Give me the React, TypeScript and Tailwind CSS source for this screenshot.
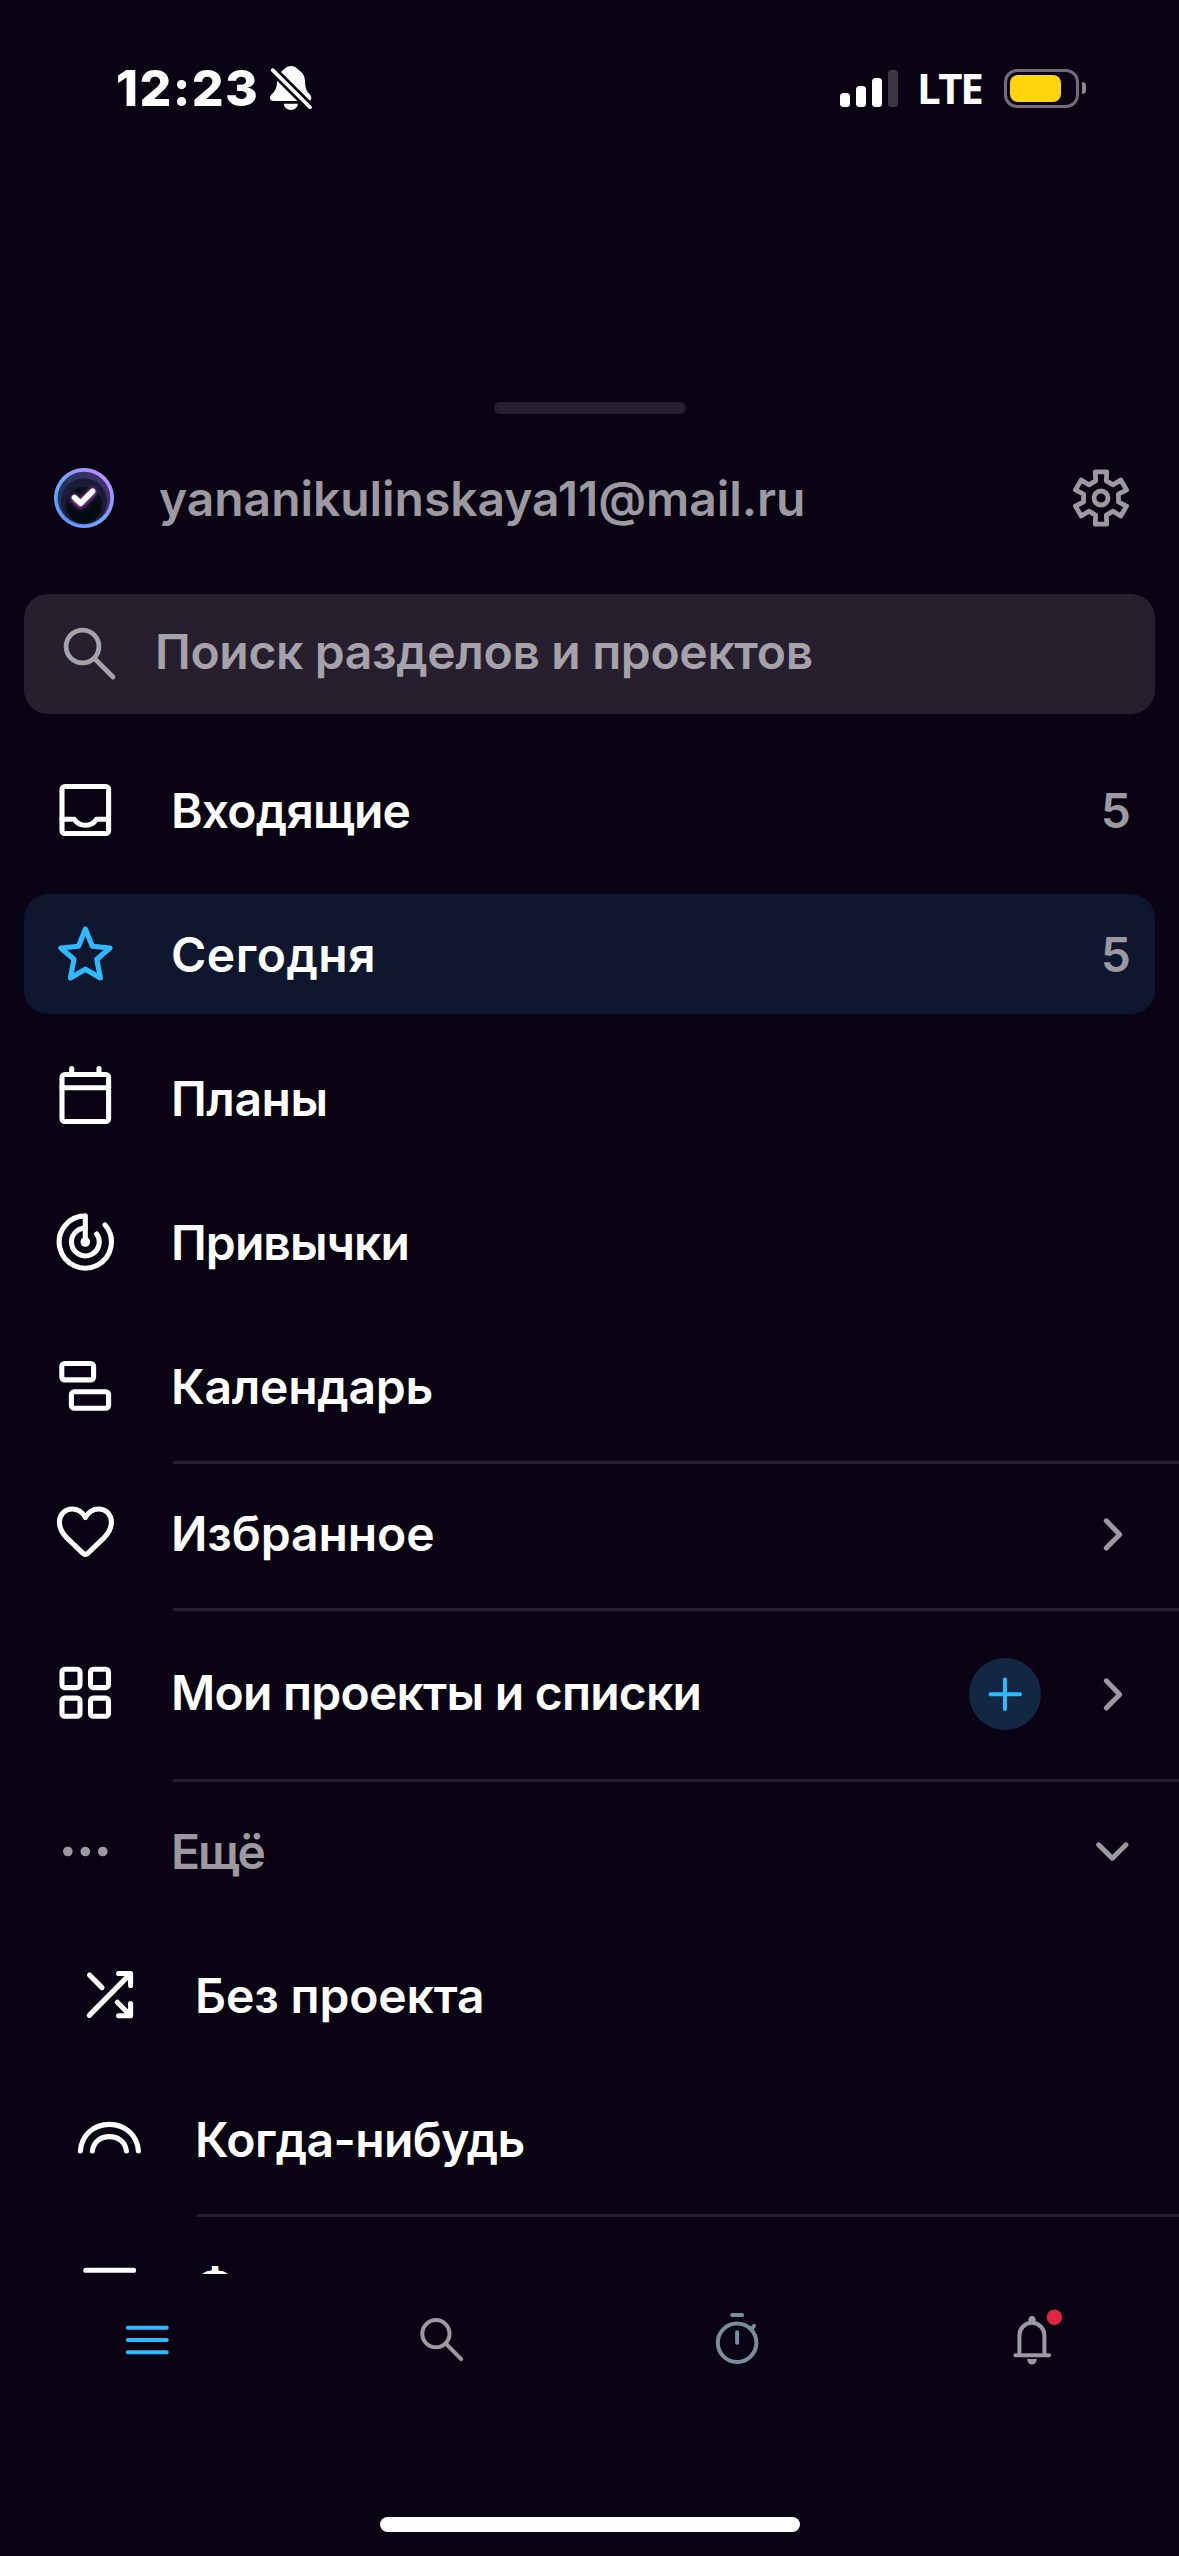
import type { ReactNode } from "react";

type IconProps = { children: ReactNode; className?: string; width?: number };

function Icon({ children, className = "", width = 5.1 }: IconProps) {
  return (
    <svg
      viewBox="0 0 72 72"
      className={`size-[72px] shrink-0 ${className}`}
      fill="none"
      stroke="currentColor"
      strokeWidth={width}
      strokeLinecap="round"
      strokeLinejoin="round"
    >
      {children}
    </svg>
  );
}

const InboxIcon = () => (
  <Icon>
    <rect x="13" y="12.5" width="46.6" height="47" rx="2.8" />
    <path d="M13 45.3H25.3c2.3 3.8 6.3 6 11.1 6s8.8-2.2 11.1-6h12" />
  </Icon>
);

const StarIcon = () => (
  <Icon className="text-[#2fbaff]">
    <path d="M36.4 11 43.3 28.2 61 30 47.8 41.2 51.4 60 36.4 51.2 21.4 60 25 41.2 11.8 30 29.5 28.2Z" />
  </Icon>
);

const PlansIcon = () => (
  <Icon>
    <rect x="13" y="12.5" width="46.6" height="47" rx="2.8" />
    <path d="M13 25.7H59.6M22.7 6.5V12M50 6.5V12" />
  </Icon>
);

const HabitsIcon = () => (
  <Icon>
    <path d="M36.3 36V9.9A26.1 26.1 0 1 0 56 18.9" />
    <path d="M36.3 22.1A13.9 13.9 0 1 0 47.7 28" />
    <circle cx="36.3" cy="36" r="4.8" fill="currentColor" stroke="none" />
  </Icon>
);

const CalendarIcon = () => (
  <Icon>
    <rect x="12.8" y="13.5" width="31.8" height="16.4" rx="2.8" />
    <rect x="22.4" y="41.8" width="37.2" height="16.4" rx="2.8" />
  </Icon>
);

const HeartIcon = () => (
  <Icon>
    <path d="M36.4 19.6C33.5 14.2 28.8 11 23 11 15.8 11 10.4 16.8 10.4 24c0 6.6 2.8 11 7.2 15.6L33.8 55.2q2.6 2.4 5.2 0L55.2 39.6C59.6 35 62.4 30.6 62.4 24 62.4 16.8 57 11 49.8 11 44 11 39.3 14.2 36.4 19.6Z" />
  </Icon>
);

const GridIcon = () => (
  <Icon>
    <rect x="13" y="11.2" width="18" height="18.4" rx="2.8" />
    <rect x="41.5" y="11.2" width="18" height="18.4" rx="2.8" />
    <rect x="13" y="40.1" width="18" height="18.2" rx="2.8" />
    <rect x="41.5" y="40.1" width="18" height="18.2" rx="2.8" />
  </Icon>
);

const DotsIcon = () => (
  <Icon className="text-[#9c99a1]">
    <g fill="currentColor" stroke="none">
      <circle cx="18.8" cy="35.5" r="4.8" />
      <circle cx="36.3" cy="35.5" r="4.8" />
      <circle cx="53.8" cy="35.5" r="4.8" />
    </g>
  </Icon>
);

const ShuffleIcon = () => (
  <Icon>
    <path d="M16.3 56.4 57.6 14.6M45.6 14.5H57.6V26.5M16.5 16 29 28.6M44.3 43.2 57 56M45.6 56.8H57.6V44.6" />
  </Icon>
);

const RainbowIcon = () => (
  <Icon>
    <path d="M7.4 48C8.5 32 21 21.4 36.4 21.4S64.3 32 65.4 48" />
    <path d="M19.4 48C20.5 38.5 28 33.6 36.4 33.6S52.3 38.5 53.4 48" />
  </Icon>
);

const FilterIcon = () => (
  <Icon>
    <path d="M12.8 19.3H60.6M22 36H51M31 52.7H42" />
  </Icon>
);

// Six-tooth cog outline, built tooth by tooth around the centre.
const cogPoints = Array.from({ length: 6 }, (_, i) =>
  [
    [-17.4, 17.9],
    [-12.4, 26.8],
    [12.4, 26.8],
    [17.4, 17.9],
  ].map(([offset, r]) => {
    const a = ((i * 60 + offset) * Math.PI) / 180;
    return `${(36 + r * Math.sin(a)).toFixed(2)},${(36 - r * Math.cos(a)).toFixed(2)}`;
  })
)
  .flat()
  .join(" ");

const GearIcon = () => (
  <Icon className="text-[#9c99a1]" width={4.8}>
    <polygon points={cogPoints} />
    <circle cx="36" cy="36" r="7" />
  </Icon>
);

const Chevron = ({ down = false }: { down?: boolean }) => (
  <svg viewBox="0 0 36 36" className="size-9 shrink-0 text-[#9c99a1]" fill="none" stroke="currentColor" strokeWidth="5" strokeLinecap="round" strokeLinejoin="round">
    <path d={down ? "M3.6 10.8 17.3 24.2 31 10.8" : "M11.3 4.8 24.7 18.4 11.3 32"} />
  </svg>
);

const Avatar = () => (
  <svg viewBox="0 0 60 60" className="size-[60px] shrink-0">
    <defs>
      <linearGradient id="ring" x1="0" y1="0.15" x2="1" y2="0.85">
        <stop offset="0" stopColor="#6fa6ff" />
        <stop offset="0.3" stopColor="#8f9cff" />
        <stop offset="0.5" stopColor="#a98aff" />
        <stop offset="0.75" stopColor="#8fa0ff" />
        <stop offset="1" stopColor="#6cb4ff" />
      </linearGradient>
      <linearGradient id="ringTint" x1="0.1" y1="0.9" x2="0.85" y2="0.1">
        <stop offset="0" stopColor="#4d8df5" />
        <stop offset="0.45" stopColor="#6fa6ff" />
        <stop offset="0.75" stopColor="#a18dff" />
        <stop offset="1" stopColor="#c58cff" />
      </linearGradient>
      <linearGradient id="shell" x1="0" y1="0.5" x2="1" y2="0.2">
        <stop offset="0" stopColor="#1f3557" />
        <stop offset="1" stopColor="#43306f" />
      </linearGradient>
      <filter id="glow" x="-50%" y="-50%" width="200%" height="200%">
        <feGaussianBlur stdDeviation="2" />
      </filter>
    </defs>
    <circle cx="30" cy="30" r="30" fill="url(#ringTint)" />
    <circle cx="30" cy="30" r="29" fill="none" stroke="url(#ring)" strokeWidth="1" />
    <circle cx="30" cy="30" r="26.3" fill="url(#shell)" />
    <circle cx="30" cy="33.2" r="23" fill="#1a1c36" />
    <circle cx="30" cy="37" r="18" fill="#0b0d18" />
    <circle cx="30" cy="41" r="14.5" fill="#050b12" />
    <path d="M20.5 30.5 26.6 36.4 38.6 24" fill="none" stroke="#b04fd0" strokeWidth="7" strokeLinecap="round" strokeLinejoin="round" filter="url(#glow)" />
    <path d="M20.5 29.5 26.6 35.2 38.6 23.2" fill="none" stroke="#fff" strokeWidth="5.6" strokeLinecap="round" strokeLinejoin="round" />
  </svg>
);

const SilentBell = () => (
  <svg viewBox="0 0 42 44" className="h-[44px] w-[42px] shrink-0">
    <path fill="#fff" d="M21 0C25.5 0 27.5 3 29.5 4.5 33.5 7.5 34.8 11 35 15.5 35.2 22 36.5 25 39 27.5 40.5 29 41.3 30.3 41.3 32 41.3 34 40 35 38 35H3.5C1.4 35 0 34 0 32 0 30.3 1 29 2.5 27.5 5.5 24.5 6.8 22 7 15.5 7.2 11 8.5 7.5 12.5 4.5 14.5 3 16.5 0 21 0Z" />
    <path fill="#fff" d="M13.7 37.8H28C27.5 41.5 24.8 44 20.9 44S14.2 41.5 13.7 37.8Z" />
    <path d="M-1 .4 43 44.2" stroke="#0a0314" strokeWidth="9" />
    <path d="M2.7 4.1 40 41.2" stroke="#fff" strokeWidth="3.6" strokeLinecap="round" />
  </svg>
);

function StatusBar() {
  return (
    <header className="flex h-[176px] items-center pr-[93px] pl-[116px]">
      <span className="w-[154px] text-[50px] leading-none font-extrabold tracking-[1.4px]">12:23</span>
      <SilentBell />
      <div className="ml-auto flex items-center">
        <div className="flex h-[37px] items-end gap-1.5">
          <i className="h-[14px] w-2.5 rounded-[3.5px] bg-white" />
          <i className="h-[21px] w-2.5 rounded-[3.5px] bg-white" />
          <i className="h-[29px] w-2.5 rounded-[3.5px] bg-white" />
          <i className="h-[37px] w-2.5 rounded-[3.5px] bg-[#3c3643]" />
        </div>
        <span className="ml-[19px] w-[87px] font-['Open_Sans'] text-[42px] leading-none font-bold tracking-[-2.4px]">LTE</span>
        <div className="flex h-[39px] w-[75px] items-center rounded-[13px] border-3 border-[#706c78] px-[3px]">
          <div className="h-[27px] w-[51px] rounded-[8px] bg-[#ffd60c]" />
        </div>
        <div className="ml-[3px] h-3 w-1 rounded-r-full bg-[#8a8791]" />
      </div>
    </header>
  );
}

type RowProps = {
  icon: ReactNode;
  label: string;
  labelClass?: string;
  className?: string;
  children?: ReactNode;
};

function Row({ icon, label, labelClass = "", className = "h-[120px]", children }: RowProps) {
  return (
    <div className={`mx-6 flex shrink-0 items-center pr-6 pl-[25px] ${className}`}>
      {icon}
      <span className={`ml-[50px] pt-0.5 leading-[60px] whitespace-nowrap ${labelClass}`}>{label}</span>
      <div className="ml-auto flex items-center">{children}</div>
    </div>
  );
}

const Count = ({ value }: { value: number }) => (
  <span className="pt-0.5 leading-[60px] text-[#9c99a1]">{value}</span>
);

const Divider = ({ className = "ml-[173px]" }: { className?: string }) => (
  <hr className={`h-[3px] shrink-0 border-0 bg-[#251f2e] ${className}`} />
);

export default function App() {
  return (
    <div className="flex h-[2556px] w-[1179px] flex-col overflow-hidden bg-[#0a0314] font-[Inter,sans-serif] text-[48px] font-semibold text-white">
      <StatusBar />
      <div className="mt-[226px] h-3 w-48 shrink-0 self-center rounded-[6px] bg-[#251f2e]" />

      <div className="mt-6 flex h-[120px] shrink-0 items-center pr-[42px] pl-[54px]">
        <Avatar />
        <span className="ml-[45px] pt-0.5 leading-[60px] tracking-[-0.05px] text-[#9c99a1]">yananikulinskaya11@mail.ru</span>
        <div className="ml-auto">
          <GearIcon />
        </div>
      </div>

      <div className="mx-6 mt-9 flex h-[120px] shrink-0 items-center rounded-[24px] bg-[#251f2e] pl-[25px] text-[#a5a2aa]">
        <Icon width={4.8}>
          <circle cx="33.5" cy="28.5" r="16.4" />
          <path d="M45.3 40.3 64 59" />
        </Icon>
        <span className="ml-[34px] pb-1 leading-[60px] tracking-[-0.34px]">Поиск разделов и проектов</span>
      </div>

      <nav className="mt-9 flex h-[1524px] shrink-0 flex-col overflow-hidden">
        <div className="flex flex-col gap-6">
          <Row icon={<InboxIcon />} label="Входящие" labelClass="tracking-[-0.8px]">
            <Count value={5} />
          </Row>
          <Row icon={<StarIcon />} label="Сегодня" labelClass="tracking-[0.5px]" className="h-[120px] rounded-[24px] bg-[#0e172d]">
            <Count value={5} />
          </Row>
          <Row icon={<PlansIcon />} label="Планы" labelClass="tracking-[-0.45px]" />
          <Row icon={<HabitsIcon />} label="Привычки" labelClass="tracking-[-0.93px]" />
          <Row icon={<CalendarIcon />} label="Календарь" labelClass="tracking-[-0.26px]" />
        </div>
        <Divider className="mt-[15px] ml-[173px]" />
        <Row icon={<HeartIcon />} label="Избранное" labelClass="pb-0.5 tracking-[-0.1px]" className="h-[144px] pb-1">
          <Chevron />
        </Row>
        <Divider />
        <Row icon={<GridIcon />} label="Мои проекты и списки" labelClass="pb-[3px] tracking-[-0.76px]" className="h-[168px] pb-[3px]">
          <div className="mr-[54px] flex size-[72px] items-center justify-center rounded-full bg-[#122842]">
            <Icon className="text-[#2fbaff]" width={4}>
              <path d="M21.5 36.3H51M36 21.6V51" />
            </Icon>
          </div>
          <Chevron />
        </Row>
        <Divider />
        <Row icon={<DotsIcon />} label="Ещё" labelClass="pb-0.5 tracking-[-2px] text-[#9c99a1]" className="h-[141px] pb-0.5">
          <Chevron down />
        </Row>
        <div className="ml-6 flex flex-col">
          <Row icon={<ShuffleIcon />} label="Без проекта" labelClass="tracking-[-0.13px]" className="h-[144px]" />
          <Row icon={<RainbowIcon />} label="Когда-нибудь" labelClass="tracking-[-0.6px]" className="h-[144px]" />
          <Divider className="mt-[3px] ml-[173px]" />
          <Row icon={<FilterIcon />} label="Фильтры" labelClass="pb-1" className="h-[144px] pb-[5px]" />
        </div>
      </nav>

      <footer className="grid h-[132px] shrink-0 grid-cols-4 place-items-center text-[#9c99a1]">
        <Icon className="text-[#2fbaff]" width={4}>
          <path d="M16.9 23.8H55.7M16.9 36H55.7M16.9 48.2H55.7" />
        </Icon>
        <Icon width={4}>
          <circle cx="29.9" cy="29.7" r="13.6" />
          <path d="M39.6 39.4 55.2 55.2" />
        </Icon>
        <Icon className="text-[#7a8d9b]" width={4}>
          <circle cx="36.1" cy="38.7" r="19.3" />
          <path d="M36.1 28.3V38.7M31.1 11H41.1M50.2 25.2 53 21.9" />
        </Icon>
        <Icon width={4}>
          <path d="M23.4 51.3V31.3a12.5 12.5 0 0 1 25 0V51.3M19.4 51.3H53" />
          <g stroke="none">
            <circle cx="36" cy="15.5" r="3.5" fill="currentColor" />
            <rect x="32.5" y="15.5" width="7" height="4" fill="currentColor" />
            <path d="M31.2 55H40.8A4.8 5.5 0 0 1 31.2 55Z" fill="currentColor" />
            <circle cx="58.4" cy="13.3" r="7.7" fill="#de2843" />
          </g>
        </Icon>
      </footer>
      <div className="mt-[111px] h-[15px] w-[420px] shrink-0 self-center rounded-full bg-white" />
    </div>
  );
}
